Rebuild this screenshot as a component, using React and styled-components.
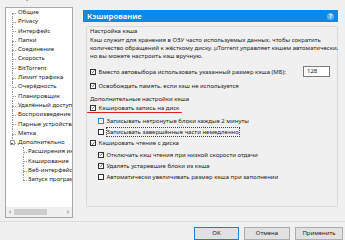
import React from "react";
import styled, { createGlobalStyle, css } from "styled-components";

const Global = createGlobalStyle`
  html, body { margin: 0; padding: 0; background: #f0f0f0; }
  body {
    width: 345px; height: 240px; overflow: hidden;
    font-family: "Noto Sans", "Open Sans", sans-serif;
    color: #1e1e1e;
  }
`;

const Window = styled.div`
  width: 345px; height: 240px;
  display: flex; flex-direction: column;
  overflow: hidden;
`;

const TitleBar = styled.div`
  height: 4px; overflow: hidden;
  display: flex; justify-content: space-between; align-items: flex-end;
  padding: 0 3px 0 8px;
  font-size: 8px; line-height: 10px; color: #333;
`;

const Main = styled.div`
  display: flex; gap: 10px;
  padding: 6px 0 0 5px;
  height: 211px;
`;

const Tree = styled.div`
  width: 68px; height: 211px; box-sizing: border-box;
  background: #fff; border: 1px solid #a8a8a8;
  display: flex; flex-direction: column;
`;

const TreeList = styled.div`
  flex: 1; overflow: hidden;
  font-size: 6.05px; line-height: 9.3px; color: #222;
`;

const TreeRow = styled.div`
  position: relative; height: 9.3px; white-space: nowrap;
  padding-left: ${p => (p.$level ? 22 : 12)}px;
  &::before {
    content: ""; position: absolute;
    left: ${p => (p.$level ? 16.5 : 5.5)}px;
    top: ${p => (p.$first ? "50%" : "0")};
    height: ${p => (p.$last || p.$first ? "50%" : "100%")};
    border-left: 1px dotted #9a9a9a;
  }
  &::after {
    content: ""; position: absolute;
    left: ${p => (p.$level ? 17 : 6)}px; width: 4px; top: 50%;
    border-top: 1px dotted #9a9a9a;
  }
`;

const Expander = styled.span`
  position: absolute; left: 3.5px; top: 2.3px; z-index: 1;
  width: 5px; height: 5px; box-sizing: border-box;
  border: 1px solid #a0a0a0; background: #fff;
  &::after {
    content: ""; position: absolute; left: 0.5px; right: 0.5px; top: 1.5px;
    border-top: 1px solid #555;
  }
`;

const HScroll = styled.div`
  height: 10px; background: #f0f0f0;
  display: flex; align-items: center; gap: 3px;
  padding: 0 3px; font-size: 7px; color: #606060;
`;

const Thumb = styled.div`
  width: 33px; height: 6px; background: #cdcdcd;
`;

const Arrow = styled.span`
  line-height: 10px; font-size: 7px;
  ${p => p.$end && css`margin-left: auto;`}
`;

const Right = styled.div`
  width: 255px; display: flex; flex-direction: column;
  padding-top: 3px;
`;

const Header = styled.div`
  height: 12px; background: #0c89e8;
  display: flex; align-items: center; justify-content: space-between;
  padding: 0 4px 0 4px;
  color: #fff; font-size: 7.8px; font-weight: 600;
`;

const Help = styled.span`
  width: 7px; height: 7px; border-radius: 50%;
  background: #5cb2f2; color: #fff;
  font-size: 5.5px; font-weight: 700; line-height: 7px; text-align: center;
`;

const Group = styled.div`
  margin: 4px 0 0 3px;
  height: 181px; box-sizing: border-box;
  border: 1px solid #dadada; border-radius: 2px;
  padding: 0 0 0 3px;
  font-size: 6px; color: #222;
  display: flex; flex-direction: column;
`;

const Label = styled.div`
  line-height: 8px; height: 8px; white-space: nowrap;
  margin-top: ${p => p.$mt || 0}px;
`;

const Desc = styled.div`
  line-height: 8px; margin-top: 1px; padding-right: 4px;
  white-space: nowrap;
`;

const CheckRow = styled.div`
  position: relative;
  display: flex; align-items: center; gap: 2.5px;
  height: ${p => p.$h || 11.2}px;
  margin-top: ${p => p.$mt || 0}px;
  padding-left: ${p => (p.$level ? 8 : 0)}px;
  white-space: nowrap;
  ${p => p.$marked && css`
    &::after {
      content: ""; position: absolute;
      left: -3px; width: 95px; bottom: -1px;
      height: 1.5px; background: #e0201a; border-radius: 1px;
    }
  `}
`;

const Box = styled.span`
  flex: none; width: 6px; height: 6px; box-sizing: border-box;
  background: #fff;
  border: 1px solid ${p => (p.$hover ? "#2a86d8" : "#333")};
  display: flex; align-items: center; justify-content: center;
`;

const Text = styled.span`
  ${p => p.$focus && css`outline: 1px dotted #444; outline-offset: 0px;`}
`;

const SizeInput = styled.div`
  margin-left: auto; margin-right: 7px;
  width: 27px; height: 11px; box-sizing: border-box;
  border: 1px solid #7a7a7a; background: #fff;
  padding-left: 3px; line-height: 9px; font-size: 6px;
`;

const Separator = styled.div`
  margin-top: 3px; border-top: 1px solid #dcdcdc;
`;

const Buttons = styled.div`
  display: flex; justify-content: flex-end; gap: 5px;
  padding: 5px 2px 0 0;
`;

const Button = styled.div`
  width: ${p => p.$w || 46}px; height: 13px; box-sizing: border-box;
  background: #e1e1e1;
  border: ${p => (p.$primary ? "1.5px solid #1b7fd6" : "1px solid #adadad")};
  font-size: 6px; line-height: 11px; text-align: center; color: #222;
`;

function Check({ checked, hover, level, focus, marked, children, h, mt, extra }) {
  return (
    <CheckRow $level={level} $marked={marked} $h={h} $mt={mt}>
      <Box $hover={hover}>
        {checked && (
          <svg width="5" height="5" viewBox="0 0 6 6">
            <polyline points="0.8,3.1 2.4,4.7 5.3,1.1" fill="none" stroke="#222" strokeWidth="0.9" />
          </svg>
        )}
      </Box>
      <Text $focus={focus}>{children}</Text>
      {extra}
    </CheckRow>
  );
}

const treeItems = [
  "Общие", "Privacy", "Интерфейс", "Папки", "Соединение", "Скорость", "BitTorrent",
  "Лимит трафика", "Очерёдность", "Планировщик", "Удалённый доступ", "Воспроизведение",
  "Парные устройства", "Метка",
];
const children = ["Расширения интерфейса", "Кэширование", "Веб-интерфейс", "Запуск программы"];

export default function App() {
  return (
    <Window>
      <Global />
      <TitleBar>
        <span>Настройки</span>
        <span>×</span>
      </TitleBar>
      <Main>
        <Tree>
          <TreeList>
            {treeItems.map((t, i) => (
              <TreeRow key={t} $first={i === 0}>{t}</TreeRow>
            ))}
            <TreeRow $last>
              <Expander />
              Дополнительно
            </TreeRow>
            {children.map((t, i) => (
              <TreeRow key={t} $level={1} $last={i === children.length - 1}>{t}</TreeRow>
            ))}
          </TreeList>
          <HScroll>
            <Arrow>‹</Arrow>
            <Thumb />
            <Arrow $end>›</Arrow>
          </HScroll>
        </Tree>
        <Right>
          <Header>
            <span>Кэширование</span>
            <Help>?</Help>
          </Header>
          <Group>
            <Label>Настройка кэша</Label>
            <Desc>
              Кэш служит для хранения в ОЗУ часто используемых данных, чтобы сократить<br />
              количество обращений к жёсткому диску. µTorrent управляет кэшем автоматически,<br />
              но вы можете настроить кэш вручную.
            </Desc>
            <Check checked h={11} mt={6} extra={<SizeInput>128</SizeInput>}>
              Вместо автовыбора использовать указанный размер кэша (МБ):
            </Check>
            <Check checked h={9} mt={4}>Освобождать память, если кэш не используется</Check>
            <Label $mt={5}>Дополнительные настройки кэша</Label>
            <Check checked marked h={9}>Кэшировать запись на диск</Check>
            <Check level={1} hover mt={3.4}>Записывать нетронутые блоки каждые 2 минуты</Check>
            <Check level={1} focus>Записывать завершённые части немедленно</Check>
            <Check checked>Кэшировать чтение с диска</Check>
            <Check level={1} checked>Отключать кэш чтения при низкой скорости отдачи</Check>
            <Check level={1} checked>Удалять устаревшие блоки из кэша</Check>
            <Check level={1}>Автоматически увеличивать размер кэша при заполнении</Check>
          </Group>
        </Right>
      </Main>
      <Separator />
      <Buttons>
        <Button $primary $w={45}>OK</Button>
        <Button>Отмена</Button>
        <Button $w={48}>Применить</Button>
      </Buttons>
    </Window>
  );
}
